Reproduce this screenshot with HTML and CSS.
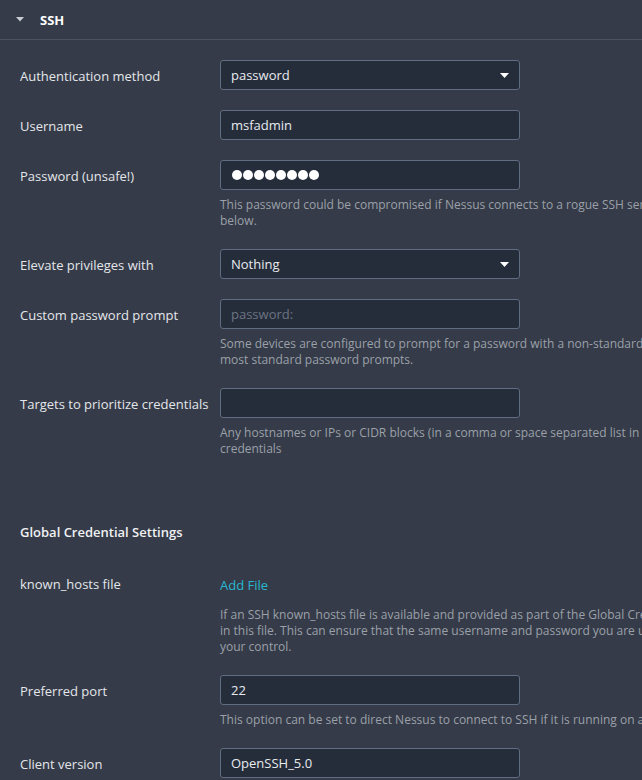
FILE: index.html
```html
<!DOCTYPE html>
<html>
<head>
<meta charset="utf-8">
<link rel="stylesheet" href="styles.css">
</head>
<body>
<div class="header">
  <svg class="caret" width="8" height="5" viewBox="0 0 8 5"><path d="M0 0H8L4 4.5Z" fill="#c9ccd2"/></svg>
  <span class="title">SSH</span>
</div>
<div class="form">
  <div class="row">
    <div class="label">Authentication method</div>
    <div class="control">
      <div class="field select"><span>password</span><svg width="9" height="5" viewBox="0 0 9 5"><path d="M0 0H9L4.5 5Z" fill="#ffffff"/></svg></div>
    </div>
  </div>
  <div class="row">
    <div class="label">Username</div>
    <div class="control">
      <div class="field"><span>msfadmin</span></div>
    </div>
  </div>
  <div class="row">
    <div class="label">Password (unsafe!)</div>
    <div class="control">
      <div class="field dots"><i></i><i></i><i></i><i></i><i></i><i></i><i></i><i></i></div>
      <div class="help">This password could be compromised if Nessus connects to a rogue SSH server. To prevent this, supply a known_hosts file as described<br>below.</div>
    </div>
  </div>
  <div class="row">
    <div class="label">Elevate privileges with</div>
    <div class="control">
      <div class="field select"><span>Nothing</span><svg width="9" height="5" viewBox="0 0 9 5"><path d="M0 0H9L4.5 5Z" fill="#ffffff"/></svg></div>
    </div>
  </div>
  <div class="row">
    <div class="label">Custom password prompt</div>
    <div class="control">
      <div class="field"><span class="placeholder">password:</span></div>
      <div class="help">Some devices are configured to prompt for a password with a non-standard prompt. Leave blank to match<br>most standard password prompts.</div>
    </div>
  </div>
  <div class="row">
    <div class="label">Targets to prioritize credentials</div>
    <div class="control">
      <div class="field"></div>
      <div class="help">Any hostnames or IPs or CIDR blocks (in a comma or space separated list in which to prioritize these<br>credentials</div>
    </div>
  </div>

  <div class="section">Global Credential Settings</div>

  <div class="row">
    <div class="label">known_hosts file</div>
    <div class="control">
      <a class="addfile">Add File</a>
      <div class="help help-file">If an SSH known_hosts file is available and provided as part of the Global Credential Settings, Nessus will only attempt<br>in this file. This can ensure that the same username and password you are using are not sent to a server outside<br>your control.</div>
    </div>
  </div>
  <div class="row">
    <div class="label">Preferred port</div>
    <div class="control">
      <div class="field"><span>22</span></div>
      <div class="help">This option can be set to direct Nessus to connect to SSH if it is running on a port other than 22.</div>
    </div>
  </div>
  <div class="row">
    <div class="label">Client version</div>
    <div class="control">
      <div class="field"><span>OpenSSH_5.0</span></div>
    </div>
  </div>
</div>
</body>
</html>
```
FILE: styles.css
```css
html, body {
  margin: 0;
  padding: 0;
}
body {
  background: #353b48;
  font-family: "Open Sans", "Noto Sans", sans-serif;
  color: #e4e6ea;
  width: 642px;
  height: 780px;
  overflow: hidden;
}
.header {
  height: 39px;
  border-bottom: 1px solid #4a5264;
  display: flex;
  align-items: center;
  padding-left: 16px;
}
.caret {
  margin-top: -1px;
}
.title {
  margin-left: 16px;
  font-size: 13px;
  font-weight: 700;
  color: #ffffff;
  line-height: 16px;
}
.form {
  padding: 20px 0 0 20px;
}
.row {
  display: grid;
  grid-template-columns: 200px 1fr;
  margin-bottom: 20px;
}
.label {
  font-size: 13px;
  line-height: 16px;
  padding-top: 8px;
  color: #e4e6ea;
}
.control {
  min-width: 0;
}
.field {
  box-sizing: border-box;
  width: 300px;
  height: 30px;
  background: #252d3b;
  border: 1px solid #5f6c81;
  border-radius: 3px;
  display: flex;
  align-items: center;
  padding: 0 10px;
  font-size: 13px;
  color: #e8eaee;
}
.select {
  justify-content: space-between;
  padding-right: 10px;
}
.select svg {
  margin-top: 1px;
}
.placeholder {
  color: #6c7482;
}
.dots {
  gap: 1px;
  padding-left: 11px;
}
.dots i {
  display: block;
  width: 10px;
  height: 10px;
  border-radius: 50%;
  background: #ffffff;
}
.help {
  margin-top: 7px;
  font-size: 12px;
  line-height: 16px;
  color: #9ba0a9;
  white-space: nowrap;
}
.section {
  font-size: 13px;
  font-weight: 600;
  line-height: 16px;
  color: #f0f1f3;
  margin-top: 67px;
  margin-bottom: 28px;
}
.addfile {
  display: block;
  font-size: 13px;
  line-height: 16px;
  padding-top: 9px;
  color: #2ab8d1;
  cursor: pointer;
}
.help-file {
  margin-top: 14px;
}
```
